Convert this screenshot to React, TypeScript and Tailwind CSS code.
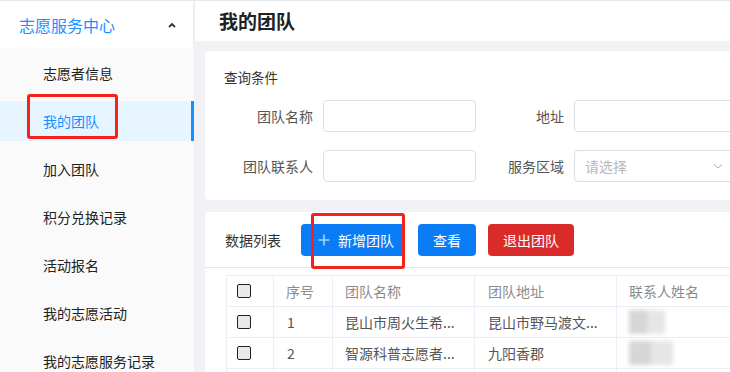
import React from "react";

const font = { fontFamily: '"Noto Sans CJK SC", "Noto Sans", sans-serif' };

const menuItems = [
  "志愿者信息",
  "我的团队",
  "加入团队",
  "积分兑换记录",
  "活动报名",
  "我的志愿活动",
  "我的志愿服务记录",
];

const rows = [
  { no: "1", name: "昆山市周火生希...", addr: "昆山市野马渡文...", blur: "w-[36px]" },
  { no: "2", name: "智源科普志愿者...", addr: "九阳香郡", blur: "w-[44px]" },
  { no: "", name: "", addr: "", blur: "" },
];

function Checkbox() {
  return (
    <div className="w-[14px] h-[14px] rounded-[2px] border-[1.5px] border-[#222] bg-[#e9e9ea]" />
  );
}

function Field({ label, labelW, inputW, placeholder, select }: { label: string; labelW: string; inputW: string; placeholder?: string; select?: boolean }) {
  return (
    <div className="flex items-center shrink-0">
      <div className={`${labelW} text-right pr-[10px] text-[14px] text-[#555]`}>{label}</div>
      <div className={`${inputW} h-[32px] rounded-[4px] border border-[#dcdfe6] bg-white flex items-center pl-[10px] pr-[10px] justify-between`}>
        <span className="text-[14px] text-[#b8b8b8]">{placeholder}</span>
        {select && (
          <svg width="12" height="12" viewBox="0 0 12 12" className="mr-[4px]">
            <path d="M2 4.5 L6 8 L10 4.5" fill="none" stroke="#b0b0b0" strokeWidth="1" />
          </svg>
        )}
      </div>
    </div>
  );
}

export default function App() {
  return (
    <div className="w-[730px] h-[372px] overflow-hidden flex items-start bg-[#f0f2f5] border-t border-[#e6e8eb]" style={font}>
      {/* sidebar */}
      <div className="w-[194px] h-[400px] shrink-0 bg-[#fafafa] flex flex-col">
        <div className="h-[47px] shrink-0 bg-white border-r border-[#eceef1] flex items-center justify-between pl-[19px] pr-[16px]">
          <span className="text-[16px] text-[#1890ff]">志愿服务中心</span>
          <svg width="10" height="8" viewBox="0 0 10 8">
            <path d="M2 6 L5 3 L8 6" fill="none" stroke="#333" strokeWidth="1.8" />
          </svg>
        </div>
        <div className="flex flex-col gap-[8px] pt-[5px]">
          {menuItems.map((m) => {
            const active = m === "我的团队";
            return (
              <div
                key={m}
                className={`relative h-[40px] shrink-0 flex items-center pl-[43px] text-[14px] ${
                  active ? "bg-[#e6f5ff] text-[#1890ff] border-r-[3px] border-[#1890ff]" : "text-[#222]"
                }`}
              >
                {m}
                {active && (
                  <div className="absolute left-[27px] top-[-7px] w-[91px] h-[45px] border-[3px] border-[#f5221b] rounded-[3px]" />
                )}
              </div>
            );
          })}
        </div>
      </div>

      {/* main */}
      <div className="flex-1 min-w-0 flex flex-col">
        <div className="h-[40px] shrink-0 bg-white border-l border-[#eceef1] flex items-center pl-[24px]">
          <span className="text-[19px] font-bold text-[#222]">我的团队</span>
        </div>
        <div className="pl-[11px] pt-[10px] flex flex-col gap-[12px] w-[800px] shrink-0">
          {/* query card */}
          <div className="bg-white rounded-[4px] h-[149px] shrink-0 pt-[16px]">
            <div className="pl-[19px] text-[13.5px] text-[#333]">查询条件</div>
            <div className="mt-[13px] flex flex-col gap-[18px]">
              <div className="flex">
                <Field label="团队名称" labelW="w-[118px]" inputW="w-[153px]" />
                <Field label="地址" labelW="w-[98px]" inputW="w-[165px]" />
              </div>
              <div className="flex">
                <Field label="团队联系人" labelW="w-[118px]" inputW="w-[153px]" />
                <Field label="服务区域" labelW="w-[98px]" inputW="w-[165px]" placeholder="请选择" select />
              </div>
            </div>
          </div>

          {/* list card */}
          <div className="bg-white rounded-[4px] h-[200px] shrink-0">
            <div className="h-[56px] border-b border-[#e6e8eb] flex items-center pl-[20px] pt-[1px]">
              <span className="text-[14px] text-[#333] mr-[20px]">数据列表</span>
              <div className="relative h-[32px] w-[104px] rounded-[4px] bg-[#0a7cf5] flex items-center pl-[17px] text-white text-[14px]">
                <svg width="12" height="12" viewBox="0 0 12 12" className="mr-[8px]">
                  <path d="M6 0.5 V11.5 M0.5 6 H11.5" stroke="#a9d1ff" strokeWidth="1.6" />
                </svg>
                新增团队
                <div className="absolute left-[10px] top-[-11px] w-[94px] h-[56px] border-[3px] border-[#f5221b] rounded-[3px]" />
              </div>
              <div className="ml-[13px] h-[32px] w-[58px] rounded-[4px] bg-[#0a7cf5] flex items-center justify-center text-white text-[14px]">
                查看
              </div>
              <div className="ml-[12px] h-[32px] w-[86px] rounded-[4px] bg-[#da2b2b] flex items-center justify-center text-white text-[14px]">
                退出团队
              </div>
            </div>
            <div className="pl-[21px] pt-[7px]">
              <table className="border-collapse text-[14px]">
                <thead>
                  <tr className="h-[31px]">
                    <th className="w-[47px] border border-[#ebeef5] pl-[10px] font-normal">
                      <Checkbox />
                    </th>
                    <th className="w-[59px] border border-[#ebeef5] text-left pl-[12px] font-normal text-[#8c8c8c]">序号</th>
                    <th className="w-[142px] border border-[#ebeef5] text-left pl-[12px] font-normal text-[#8c8c8c]">团队名称</th>
                    <th className="w-[142px] border border-[#ebeef5] text-left pl-[13px] font-normal text-[#8c8c8c]">团队地址</th>
                    <th className="w-[140px] border border-[#ebeef5] text-left pl-[12px] font-normal text-[#8c8c8c]">联系人姓名</th>
                  </tr>
                </thead>
                <tbody>
                  {rows.map((r, i) => (
                    <tr key={i} className="h-[31px] text-[#555]">
                      <td className="border border-[#ebeef5] pl-[10px]">{r.no && <Checkbox />}</td>
                      <td className="border border-[#ebeef5] pl-[13px]">{r.no}</td>
                      <td className="border border-[#ebeef5] pl-[12px]">{r.name}</td>
                      <td className="border border-[#ebeef5] pl-[13px]">{r.addr}</td>
                      <td className="border border-[#ebeef5] pl-[12px]">
                        {r.blur && (
                          <div className={`${r.blur} h-[24px] flex blur-[2px]`}>
                            <div className="flex-1 bg-[#d6d6d6]" />
                            <div className="flex-1 bg-[#e6e6e6]" />
                          </div>
                        )}
                      </td>
                    </tr>
                  ))}
                </tbody>
              </table>
            </div>
          </div>
        </div>
      </div>
    </div>
  );
}
